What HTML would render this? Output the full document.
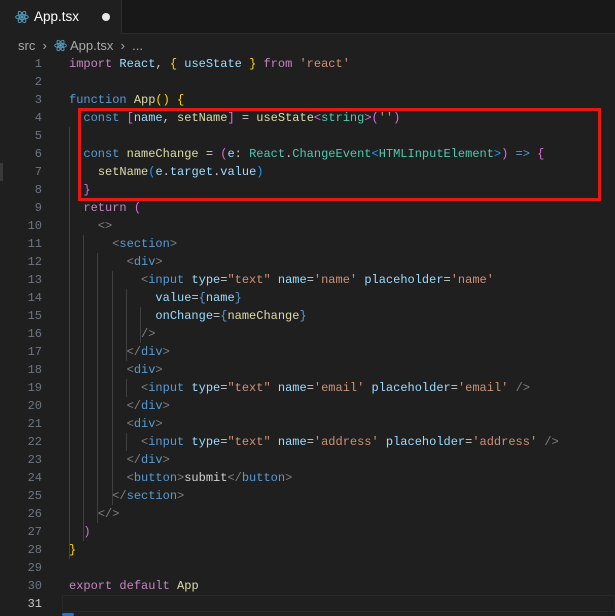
<!DOCTYPE html>
<html><head><meta charset="utf-8"><style>
body{margin:0;width:615px;height:616px;overflow:hidden;background:#1f1f1f;font-family:"Liberation Sans",sans-serif;position:relative}
.tabbar{position:absolute;left:0;top:0;width:615px;height:33px;background:#181818;border-bottom:1px solid #2b2b2b}
.tab{position:absolute;left:0;top:0;width:121px;height:34px;background:#1f1f1f;border-right:1px solid #2b2b2b}
.tab .t{position:absolute;left:34px;top:9px;color:#fff;font-size:13.5px}
.dot{position:absolute;left:102px;top:13px;width:8px;height:8px;border-radius:50%;background:#e8e8e8}
.bc{position:absolute;top:38px;left:18px;color:#a9a9a9;font-size:13px;white-space:pre}
.ln{position:absolute;left:0;width:42px;text-align:right;color:#6e7681;font:12px/18px "Liberation Mono",monospace}
.cl{position:absolute;left:69px;white-space:pre;font:12px/18px "Liberation Mono",monospace;color:#cccccc}
.g{position:absolute;width:1px;background:#404040}
.k{color:#c586c0}.v{color:#9cdcfe}.f{color:#dcdcaa}.s{color:#ce9178}.t2{color:#4ec9b0}.b{color:#569cd6}.p{color:#808080}.y{color:#ffd700}.m{color:#da70d6}.c{color:#179fff}.w{color:#d4d4d4}
</style></head><body>
<div class="tabbar"></div>
<div class="tab">
<svg style="position:absolute;left:15px;top:10px" width="14" height="14" viewBox="0 0 14 14" fill="none" stroke="#519aba" stroke-width="1"><ellipse cx="7" cy="7" rx="6.3" ry="2.4"/><ellipse cx="7" cy="7" rx="6.3" ry="2.4" transform="rotate(60 7 7)"/><ellipse cx="7" cy="7" rx="6.3" ry="2.4" transform="rotate(120 7 7)"/><circle cx="7" cy="7" r="1.1" fill="#519aba"/></svg>
<span class="t">App.tsx</span><div class="dot"></div></div>
<div class="bc">src  ›  <svg style="vertical-align:-2px" width="13" height="13" viewBox="0 0 14 14" fill="none" stroke="#519aba" stroke-width="1"><ellipse cx="7" cy="7" rx="6.3" ry="2.4"/><ellipse cx="7" cy="7" rx="6.3" ry="2.4" transform="rotate(60 7 7)"/><ellipse cx="7" cy="7" rx="6.3" ry="2.4" transform="rotate(120 7 7)"/><circle cx="7" cy="7" r="1.1" fill="#519aba"/></svg> App.tsx  ›  ...</div>

<div class="g" style="left:69px;top:127px;height:432px"></div>
<div class="g" style="left:83px;top:235px;height:306px"></div>
<div class="g" style="left:97px;top:253px;height:270px"></div>
<div class="g" style="left:112px;top:271px;height:234px"></div>
<div class="g" style="left:126px;top:289px;height:72px"></div>
<div class="g" style="left:126px;top:379px;height:18px"></div>
<div class="g" style="left:126px;top:433px;height:18px"></div>
<div class="g" style="left:140px;top:307px;height:36px"></div>
<div style="position:absolute;left:62px;top:595px;width:553px;height:17px;border:1px solid #282828;box-sizing:border-box"></div>
<div style="position:absolute;left:0;top:163px;width:3px;height:18px;background:#3a3a3a"></div>

<div class="ln" style="top:55px">1</div><div class="cl" style="top:55px"><span class="k">import</span> <span class="v">React</span>, <span class="y">{</span> <span class="v">useState</span> <span class="y">}</span> <span class="k">from</span> <span class="s">'react'</span></div>
<div class="ln" style="top:73px">2</div>
<div class="ln" style="top:91px">3</div><div class="cl" style="top:91px"><span class="b">function</span> <span class="f">App</span><span class="y">()</span> <span class="y">{</span></div>
<div class="ln" style="top:109px">4</div><div class="cl" style="top:109px">  <span class="b">const</span> <span class="m">[</span><span class="v">name</span>, <span class="f">setName</span><span class="m">]</span> = <span class="f">useState</span><span class="m">&lt;</span><span class="t2">string</span><span class="m">&gt;(</span><span class="s">''</span><span class="m">)</span></div>
<div class="ln" style="top:127px">5</div>
<div class="ln" style="top:145px">6</div><div class="cl" style="top:145px">  <span class="b">const</span> <span class="f">nameChange</span> = <span class="m">(</span><span class="v">e</span>: <span class="t2">React</span>.<span class="t2">ChangeEvent</span><span class="c">&lt;</span><span class="t2">HTMLInputElement</span><span class="c">&gt;</span><span class="m">)</span> <span class="b">=&gt;</span> <span class="m">{</span></div>
<div class="ln" style="top:163px">7</div><div class="cl" style="top:163px">    <span class="f">setName</span><span class="c">(</span><span class="v">e</span>.<span class="v">target</span>.<span class="v">value</span><span class="c">)</span></div>
<div class="ln" style="top:181px">8</div><div class="cl" style="top:181px">  <span class="m">}</span></div>
<div class="ln" style="top:199px">9</div><div class="cl" style="top:199px">  <span class="k">return</span> <span class="m">(</span></div>
<div class="ln" style="top:217px">10</div><div class="cl" style="top:217px">    <span class="p">&lt;&gt;</span></div>
<div class="ln" style="top:235px">11</div><div class="cl" style="top:235px">      <span class="p">&lt;</span><span class="b">section</span><span class="p">&gt;</span></div>
<div class="ln" style="top:253px">12</div><div class="cl" style="top:253px">        <span class="p">&lt;</span><span class="b">div</span><span class="p">&gt;</span></div>
<div class="ln" style="top:271px">13</div><div class="cl" style="top:271px">          <span class="p">&lt;</span><span class="b">input</span> <span class="v">type</span>=<span class="s">"text"</span> <span class="v">name</span>=<span class="s">'name'</span> <span class="v">placeholder</span>=<span class="s">'name'</span></div>
<div class="ln" style="top:289px">14</div><div class="cl" style="top:289px">            <span class="v">value</span>=<span class="b">{</span><span class="v">name</span><span class="b">}</span></div>
<div class="ln" style="top:307px">15</div><div class="cl" style="top:307px">            <span class="v">onChange</span>=<span class="b">{</span><span class="f">nameChange</span><span class="b">}</span></div>
<div class="ln" style="top:325px">16</div><div class="cl" style="top:325px">          <span class="p">/&gt;</span></div>
<div class="ln" style="top:343px">17</div><div class="cl" style="top:343px">        <span class="p">&lt;/</span><span class="b">div</span><span class="p">&gt;</span></div>
<div class="ln" style="top:361px">18</div><div class="cl" style="top:361px">        <span class="p">&lt;</span><span class="b">div</span><span class="p">&gt;</span></div>
<div class="ln" style="top:379px">19</div><div class="cl" style="top:379px">          <span class="p">&lt;</span><span class="b">input</span> <span class="v">type</span>=<span class="s">"text"</span> <span class="v">name</span>=<span class="s">'email'</span> <span class="v">placeholder</span>=<span class="s">'email'</span> <span class="p">/&gt;</span></div>
<div class="ln" style="top:397px">20</div><div class="cl" style="top:397px">        <span class="p">&lt;/</span><span class="b">div</span><span class="p">&gt;</span></div>
<div class="ln" style="top:415px">21</div><div class="cl" style="top:415px">        <span class="p">&lt;</span><span class="b">div</span><span class="p">&gt;</span></div>
<div class="ln" style="top:433px">22</div><div class="cl" style="top:433px">          <span class="p">&lt;</span><span class="b">input</span> <span class="v">type</span>=<span class="s">"text"</span> <span class="v">name</span>=<span class="s">'address'</span> <span class="v">placeholder</span>=<span class="s">'address'</span> <span class="p">/&gt;</span></div>
<div class="ln" style="top:451px">23</div><div class="cl" style="top:451px">        <span class="p">&lt;/</span><span class="b">div</span><span class="p">&gt;</span></div>
<div class="ln" style="top:469px">24</div><div class="cl" style="top:469px">        <span class="p">&lt;</span><span class="b">button</span><span class="p">&gt;</span><span class="w">submit</span><span class="p">&lt;/</span><span class="b">button</span><span class="p">&gt;</span></div>
<div class="ln" style="top:487px">25</div><div class="cl" style="top:487px">      <span class="p">&lt;/</span><span class="b">section</span><span class="p">&gt;</span></div>
<div class="ln" style="top:505px">26</div><div class="cl" style="top:505px">    <span class="p">&lt;/&gt;</span></div>
<div class="ln" style="top:523px">27</div><div class="cl" style="top:523px">  <span class="m">)</span></div>
<div class="ln" style="top:541px">28</div><div class="cl" style="top:541px"><span class="y">}</span></div>
<div class="ln" style="top:559px">29</div>
<div class="ln" style="top:577px">30</div><div class="cl" style="top:577px"><span class="k">export</span> <span class="k">default</span> <span class="f">App</span></div>
<div class="ln" style="top:595px;color:#cccccc">31</div>

<div style="position:absolute;left:78px;top:108px;width:523px;height:93px;border:3px solid #e8170f;box-sizing:border-box"></div>
<div style="position:absolute;left:62px;top:613px;width:12px;height:3px;background:#2a6fd6;border-radius:2px"></div>
</body></html>
